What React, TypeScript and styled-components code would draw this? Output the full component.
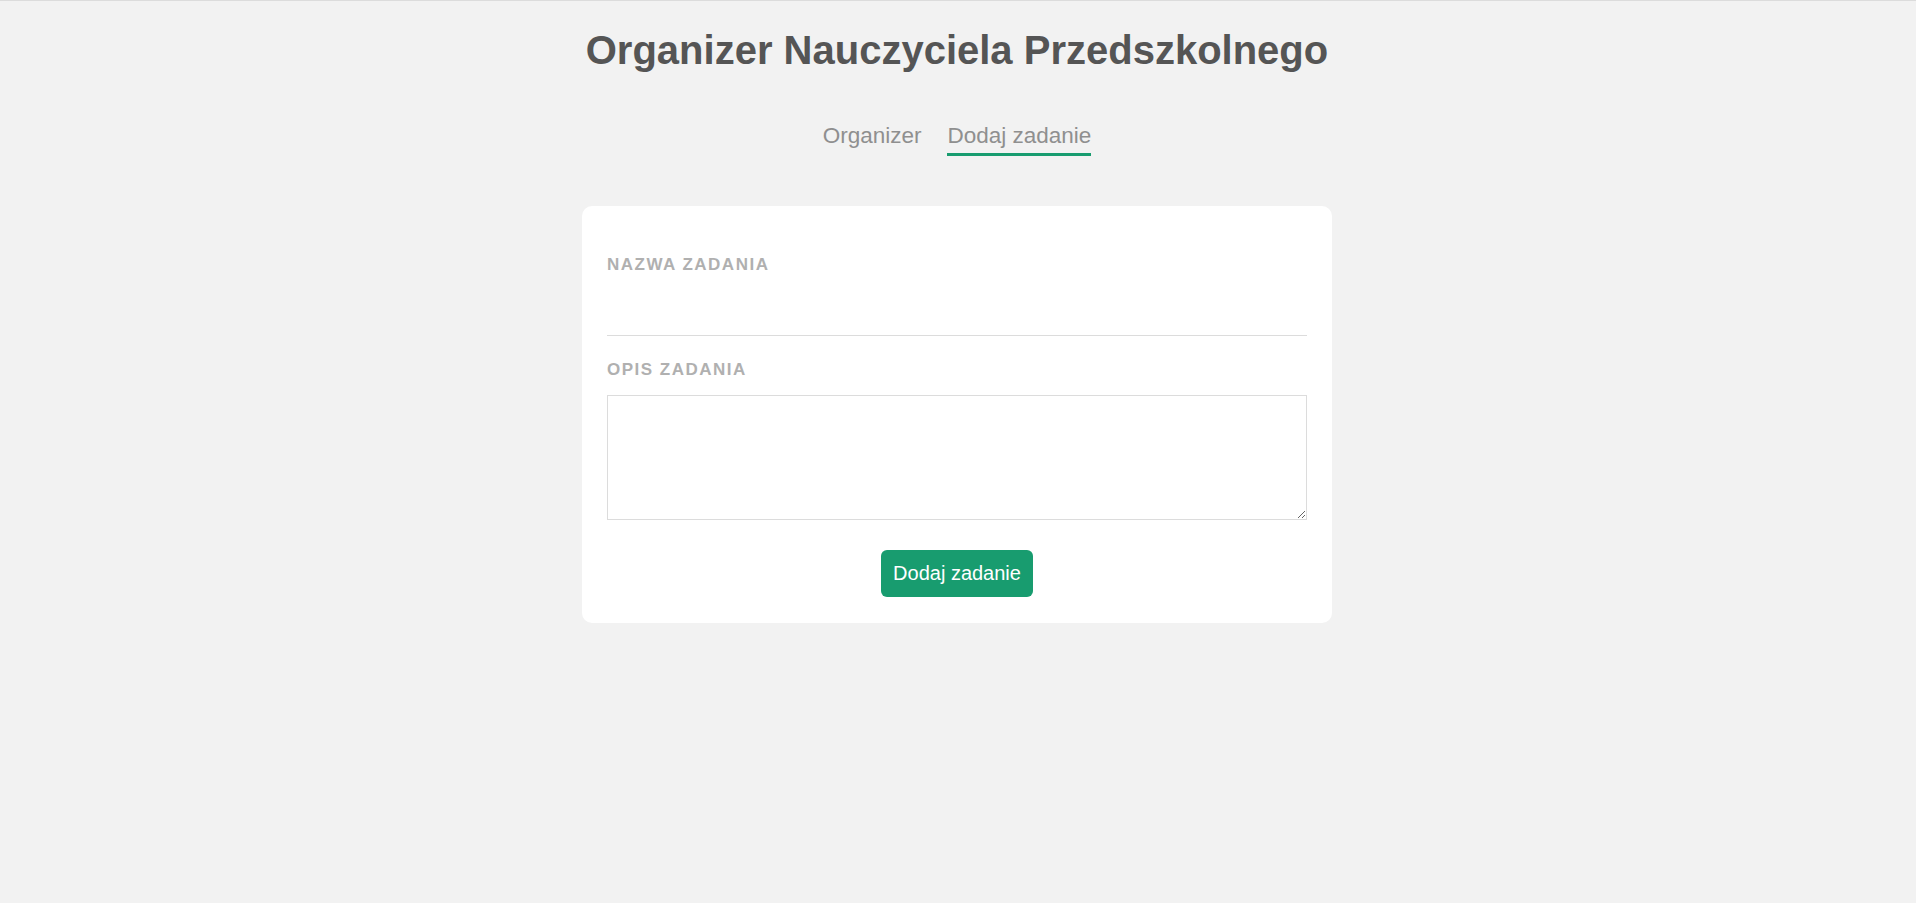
import React from "react";
import styled, { createGlobalStyle } from "styled-components";

const GlobalStyle = createGlobalStyle`
  html, body {
    margin: 0;
    padding: 0;
    background: #f2f2f2;
    font-family: "Liberation Sans", Arial, sans-serif;
  }
  body {
    border-top: 1px solid #dcdcdc;
    min-height: 902px;
    box-sizing: border-box;
  }
`;

const Page = styled.div`
  display: flex;
  flex-direction: column;
  align-items: center;
  padding-right: 2px;
`;

const Title = styled.h1`
  margin: 26px 0 50px;
  font-size: 40px;
  font-weight: 700;
  line-height: 46px;
  color: #555555;
`;

const Nav = styled.nav`
  display: flex;
  gap: 26px;
  margin-bottom: 50px;
`;

const Tab = styled.a<{ $active?: boolean }>`
  font-size: 22.5px;
  line-height: 25px;
  color: #8f8f8f;
  text-decoration: none;
  padding-bottom: 5px;
  border-bottom: 3px solid ${(p) => (p.$active ? "#189c6f" : "transparent")};
  cursor: pointer;
`;

const Card = styled.form`
  width: 750px;
  box-sizing: border-box;
  background: #ffffff;
  border-radius: 10px;
  padding: 50px 25px 26px;
  display: flex;
  flex-direction: column;
`;

const Field = styled.div`
  display: flex;
  flex-direction: column;
  & + & {
    margin-top: 25px;
  }
`;

const Label = styled.label`
  font-size: 17px;
  line-height: 18px;
  font-weight: 700;
  letter-spacing: 1.5px;
  text-transform: uppercase;
  color: #b0b0b0;
  margin-bottom: 16px;
`;

const TextInput = styled.input`
  height: 46px;
  box-sizing: border-box;
  border: none;
  border-bottom: 1px solid #dcdcdc;
  outline: none;
  font-family: inherit;
  font-size: 18px;
  padding: 0;
  background: transparent;
`;

const TextArea = styled.textarea`
  height: 125px;
  box-sizing: border-box;
  border: 1px solid #dcdcdc;
  outline: none;
  font-family: inherit;
  font-size: 16px;
  padding: 6px;
`;

const Actions = styled.div`
  display: flex;
  justify-content: center;
  margin-top: 30px;
`;

const Button = styled.button`
  background: #189c6f;
  color: #ffffff;
  border: none;
  border-radius: 6px;
  font-family: inherit;
  font-size: 20px;
  line-height: 23px;
  padding: 12px 12px;
  cursor: pointer;
`;

export default function App() {
  return (
    <>
      <GlobalStyle />
      <Page>
        <Title>Organizer Nauczyciela Przedszkolnego</Title>
        <Nav>
          <Tab>Organizer</Tab>
          <Tab $active>Dodaj zadanie</Tab>
        </Nav>
        <Card onSubmit={(e) => e.preventDefault()}>
          <Field>
            <Label htmlFor="name">Nazwa zadania</Label>
            <TextInput id="name" type="text" />
          </Field>
          <Field>
            <Label htmlFor="desc">Opis zadania</Label>
            <TextArea id="desc" />
          </Field>
          <Actions>
            <Button type="submit">Dodaj zadanie</Button>
          </Actions>
        </Card>
      </Page>
    </>
  );
}
